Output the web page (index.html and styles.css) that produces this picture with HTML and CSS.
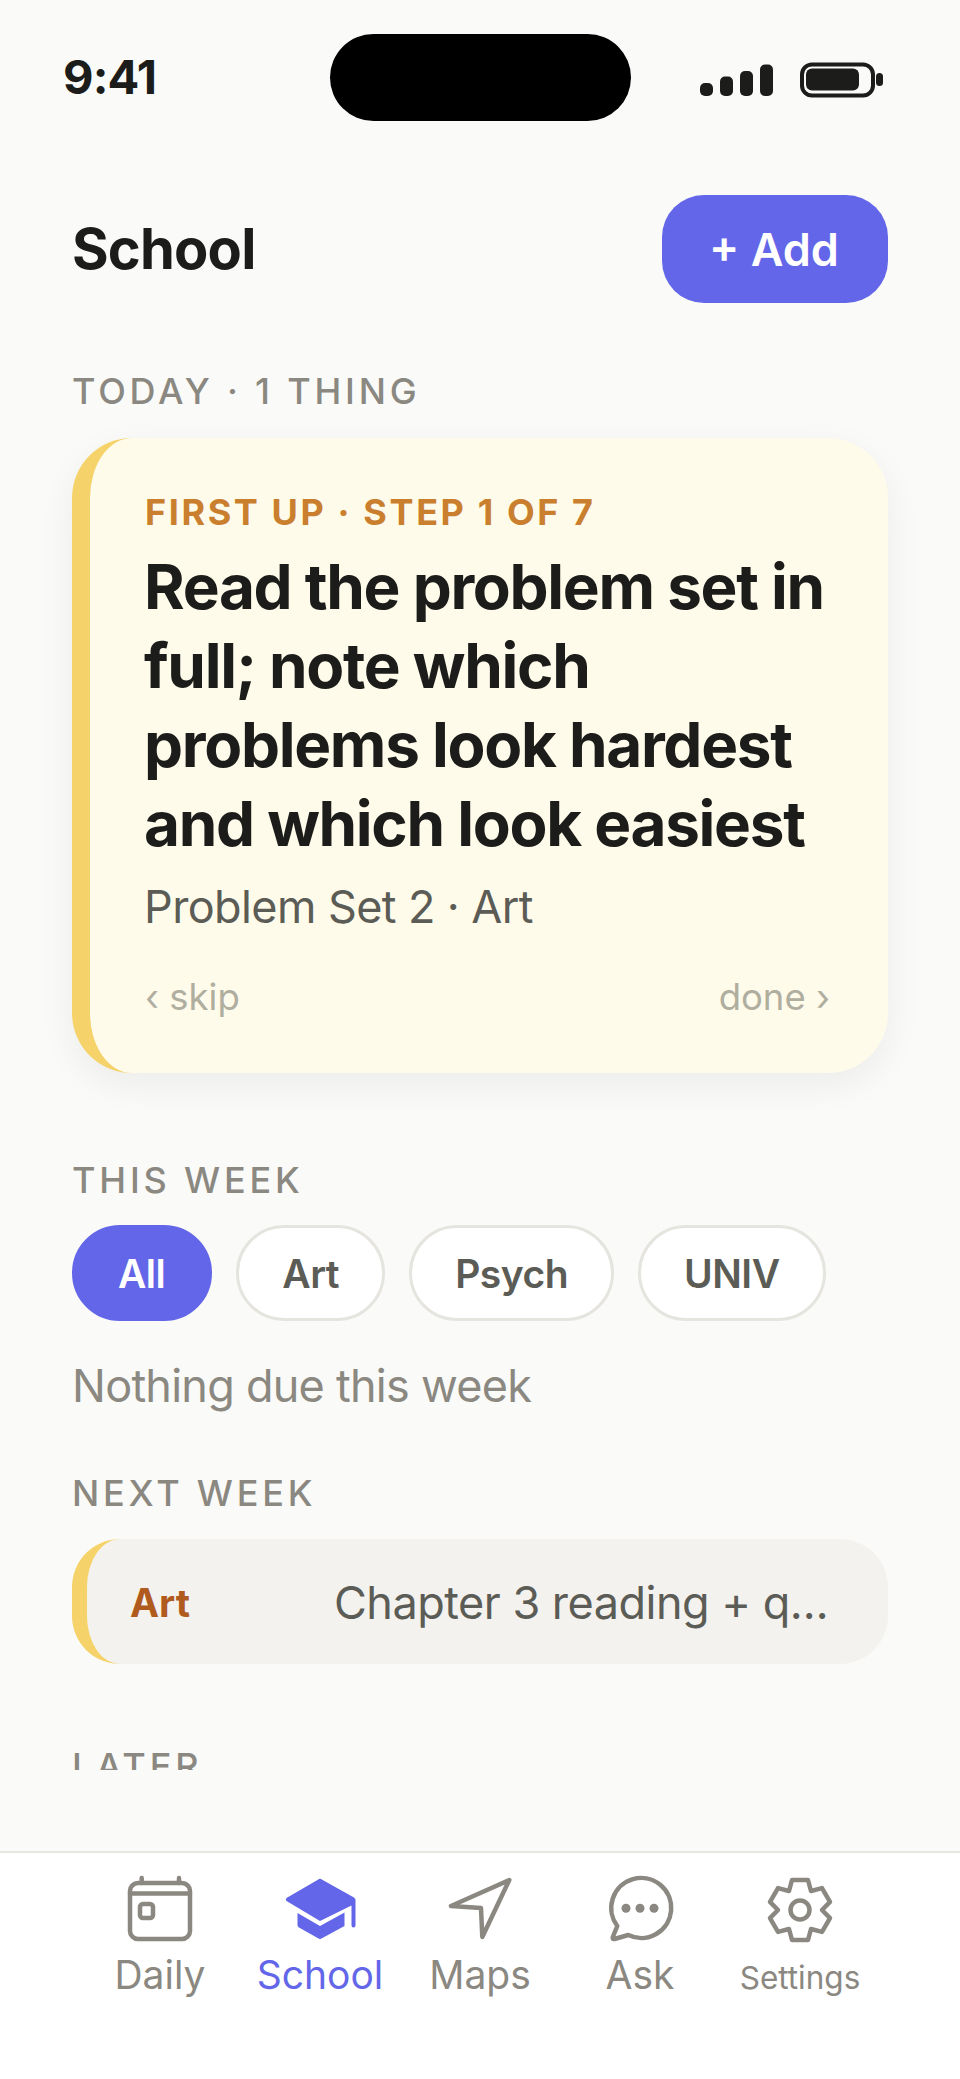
FILE: index.html
```html
<!DOCTYPE html>
<html lang="en">
<head>
<meta charset="UTF-8">
<meta name="viewport" content="width=device-width, initial-scale=1.0">
<title>School</title>
<link rel="stylesheet" href="styles.css">
</head>
<body>

<div class="screen">
  <div class="status-bar">
    <div class="time">9:41</div>
    <div class="island"></div>
    <svg class="status-icons" width="190" height="40" viewBox="0 0 190 40">
      <rect x="7" y="21" width="13" height="13" rx="5"/>
      <rect x="27" y="14.5" width="13" height="19.5" rx="5"/>
      <rect x="47" y="9" width="13" height="25" rx="5"/>
      <rect x="67" y="2.500" width="13" height="31.500" rx="5"/>
      <rect x="109" y="2.500" width="71" height="31" rx="10" class="battery-case"/>
      <rect x="113" y="6.500" width="53" height="22" rx="6"/>
      <rect x="183" y="11" width="7" height="13" rx="3.500"/>
    </svg>
  </div>

  <main class="content">
    <header class="page-head">
      <h1 class="page-title">School</h1>
      <button class="add-btn" type="button">+ Add</button>
    </header>

    <div class="section-label">TODAY · 1 THING</div>
    <section class="focus-card">
      <div class="focus-step">FIRST UP · STEP 1 OF 7</div>
      <div class="focus-title">Read the problem set in full; note which problems look hardest and which look easiest</div>
      <div class="focus-sub">Problem Set 2 · Art</div>
      <div class="focus-actions">
        <span>‹ skip</span>
        <span>done ›</span>
      </div>
    </section>

    <div class="section-label week-label">THIS WEEK</div>
    <div class="chips">
      <span class="chip chip-active">All</span>
      <span class="chip">Art</span>
      <span class="chip">Psych</span>
      <span class="chip">UNIV</span>
    </div>
    <p class="empty-note">Nothing due this week</p>

    <div class="section-label next-label">NEXT WEEK</div>
    <div class="task-row">
      <span class="task-course">Art</span>
      <span class="task-name">Chapter 3 reading + quiz on key terms</span>
    </div>

    <div class="section-label later-label">LATER</div>
  </main>

  <nav class="tab-bar">
    <div class="tab">
      <svg class="tab-icon" viewBox="0 0 72 72">
        <rect x="6" y="9" width="60" height="56" rx="8"/>
        <path d="M6 19.500H66M17.700 4V9M55 4V9"/>
        <rect x="16" y="30" width="13" height="14" rx="3"/>
      </svg>
      <span class="tab-label">Daily</span>
    </div>
    <div class="tab tab-active">
      <svg class="tab-icon tab-icon-solid" viewBox="0 0 72 72">
        <path d="M36 4.500L70 23.500Q71.500 24.500 71.500 26V51.500Q71.500 53.500 69.500 53.500T67.500 51.500V31.500L36 47L2.500 27Q1 25.500 2.500 24Z"/>
        <path d="M13.500 39L36 52L60.500 38.500V52L37.500 64.500Q36 65.300 34.500 64.500L15 53.500Q13.500 52.500 13.500 51Z"/>
      </svg>
      <span class="tab-label">School</span>
    </div>
    <div class="tab">
      <svg class="tab-icon" viewBox="0 0 72 72">
        <path d="M65.300 6L7 32L37 34L38.300 63Z"/>
      </svg>
      <span class="tab-label">Maps</span>
    </div>
    <div class="tab">
      <svg class="tab-icon" viewBox="0 0 72 72">
        <path d="M13.300 52A30 30 0 1 1 24.300 61L10.500 65Q8 65.500 8.800 63L13.300 52Z"/>
        <circle class="dot" cx="22" cy="34.300" r="4.500"/>
        <circle class="dot" cx="36" cy="34.300" r="4.500"/>
        <circle class="dot" cx="50" cy="34.300" r="4.500"/>
      </svg>
      <span class="tab-label">Ask</span>
    </div>
    <div class="tab">
      <svg class="tab-icon" viewBox="0 0 72 72">
        <polygon points="28,6 44,6 47,17 58,14.100 66,27.900 58,36 66,44.100 58,57.900 47,55 44,66 28,66 25,55 14,57.900 6,44.100 14,36 6,27.900 14,14.100 25,17"/>
        <circle cx="36" cy="36" r="9.500"/>
      </svg>
      <span class="tab-label tab-label-small">Settings</span>
    </div>
  </nav>
</div>

</body>
</html>
```

FILE: styles.css
```css
* {
  box-sizing: border-box;
}
html, body {
  margin: 0;
  padding: 0;
}
body {
  font-family: Inter, "Liberation Sans", sans-serif;
  background: #fafaf8;
  color: #1c1c1a;
}
.screen {
  width: 960px;
  height: 2079px;
  display: flex;
  flex-direction: column;
  overflow: hidden;
}

/* status bar */
.status-bar {
  display: grid;
  grid-template-columns: 1fr 301px 1fr;
  align-items: center;
  height: 87px;
  margin-top: 34px;
  padding: 0 63px 0 64px;
}
.time {
  font-size: 47px;
  font-weight: 700;
  line-height: 1;
  letter-spacing: -0.8px;
  margin-left: -1px;
  padding-bottom: 2px;
}
.island {
  height: 87px;
  background: #000;
  border-radius: 44px;
}
.status-icons {
  justify-self: end;
  margin-top: 8px;
  margin-right: 14px;
  fill: #1c1c1a;
}
.battery-case {
  fill: none;
  stroke: #1c1c1a;
  stroke-width: 4;
}

/* scrolling part */
.content {
  height: 1649px;
  overflow: hidden;
  padding: 74px 72px 0;
}
.page-head {
  display: flex;
  justify-content: space-between;
  align-items: center;
}
.page-title {
  margin: 0;
  font-size: 56px;
  font-weight: 700;
  letter-spacing: -0.8px;
}
.add-btn {
  width: 226px;
  height: 108px;
  border: none;
  border-radius: 42px;
  background: #6366e8;
  color: #fff;
  font-family: inherit;
  font-size: 45px;
  font-weight: 600;
  padding: 0 2px 0 0;
}
.section-label {
  font-size: 36px;
  font-weight: 500;
  line-height: 40px;
  letter-spacing: 3.8px;
  color: #8a8880;
  margin-top: 68px;
}
.focus-card {
  margin-top: 27px;
  height: 635px;
  padding: 54px 58px 0 55px;
  background: #fffbeb;
  border-left: 18px solid #f5d36a;
  border-radius: 60px;
  box-shadow: 0 12px 36px rgba(0, 0, 0, 0.06);
}
.focus-step {
  font-size: 36px;
  font-weight: 700;
  line-height: 40px;
  letter-spacing: 2.6px;
  color: #c97f2e;
}
.focus-title {
  margin: 15px 0 0 -1px;
  font-size: 62px;
  font-weight: 700;
  line-height: 79px;
  letter-spacing: -1.3px;
}
.focus-sub {
  margin: 17px 0 0 -1px;
  font-size: 45px;
  line-height: 54px;
  letter-spacing: -0.6px;
  color: #5c5c56;
}
.focus-actions {
  display: flex;
  justify-content: space-between;
  margin-top: 41px;
  font-size: 36.500px;
  line-height: 44px;
  color: #b0ae9f;
}
.week-label {
  margin-top: 87px;
}
.chips {
  display: flex;
  gap: 24px;
  margin-top: 25px;
}
.chip {
  display: flex;
  align-items: center;
  height: 96px;
  padding: 0 43px;
  border: 3px solid #e5e4df;
  border-radius: 48px;
  background: #fff;
  font-size: 39px;
  font-weight: 600;
  letter-spacing: -0.5px;
  color: #5c5c56;
}
.chip-active {
  padding: 0 44px 0 43px;
  background: #6366e8;
  border-color: #6366e8;
  color: #fff;
}
.empty-note {
  margin: 38px 0 0;
  font-size: 45px;
  line-height: 54px;
  letter-spacing: -0.75px;
  color: #8a8880;
}
.next-label {
  margin-top: 60px;
}
.task-row {
  display: flex;
  align-items: center;
  height: 125px;
  margin-top: 26px;
  padding: 2px 50px 0 43px;
  background: #f3f2ef;
  border-left: 15px solid #f5d36a;
  border-radius: 48px;
}
.task-course {
  flex: 0 0 204px;
  font-size: 39px;
  font-weight: 700;
  color: #b05a1e;
}
.task-name {
  flex: 1;
  min-width: 0;
  overflow: hidden;
  white-space: nowrap;
  text-overflow: ellipsis;
  font-size: 45px;
  letter-spacing: -0.5px;
  color: #5c5c56;
}
.later-label {
  margin-top: 82px;
}

/* bottom tabs */
.tab-bar {
  flex: 1;
  margin-top: 81px;
  display: flex;
  padding: 21px 80px 0;
  background: #fff;
  border-top: 2px solid #e8e6e0;
}
.tab {
  flex: 1;
  display: flex;
  flex-direction: column;
  align-items: center;
  color: #8a8880;
}
.tab-active {
  color: #6366e8;
}
.tab-icon {
  width: 72px;
  height: 72px;
  fill: none;
  stroke: currentColor;
  stroke-width: 4.500;
  stroke-linecap: round;
  stroke-linejoin: round;
}
.tab-icon-solid {
  fill: currentColor;
  stroke: none;
}
.tab-icon .dot {
  fill: currentColor;
  stroke: none;
}
.tab-label {
  margin-top: 5px;
  height: 48px;
  font-size: 39px;
  font-weight: 400;
  line-height: 48px;
  white-space: nowrap;
}
.tab-label-small {
  padding-top: 3px;
  font-size: 31.500px;
}
```
